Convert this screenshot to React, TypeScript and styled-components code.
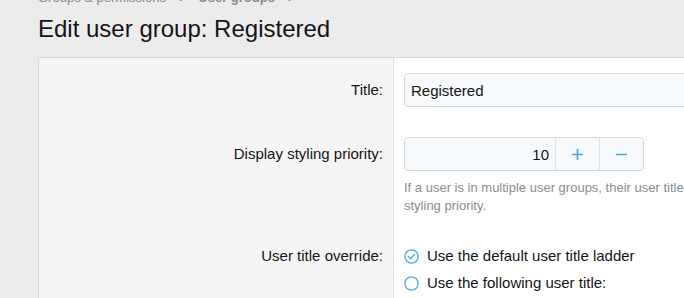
import React, { useState } from 'react'
import styled, { createGlobalStyle } from 'styled-components'

const GlobalStyle = createGlobalStyle`
  html, body {
    margin: 0;
    padding: 0;
    background: #ececec;
    overflow: hidden;
  }
  body {
    font-family: "Liberation Sans", Arial, Helvetica, sans-serif;
    color: #141414;
  }
`

const Page = styled.div`
  padding: 0 0 0 38px;
  width: 1100px;
`

const Crumbs = styled.ul`
  display: flex;
  align-items: center;
  gap: 13px;
  list-style: none;
  margin: -10px 0 0;
  padding: 0;
  font-size: 13px;
  line-height: 16px;
  color: #8a8a8a;
`

const Crumb = styled.li<{ current?: boolean }>`
  font-weight: ${props => (props.current ? 'bold' : 'normal')};
`

const Sep = styled.li`
  font-size: 11px;
`

const Title = styled.h1`
  margin: 8px 0 13px;
  font-size: 24px;
  line-height: 30px;
  font-weight: normal;
  color: #141414;
`

const Block = styled.div`
  border: 1px solid #d8d8d8;
  border-radius: 3px;
  background: #fff;
  overflow: hidden;
`

const Row = styled.dl`
  display: grid;
  grid-template-columns: 355px 1fr;
  margin: 0;
`

const Label = styled.dt<{ lineHeight: number }>`
  background: #f5f5f5;
  border-right: 1px solid #e3e3e3;
  padding: 15px 10px;
  text-align: right;
  font-size: 15px;
  line-height: ${props => props.lineHeight}px;
  color: #141414;
`

const Field = styled.dd`
  margin: 0;
  padding: 15px 10px;
`

const TextInput = styled.input`
  box-sizing: border-box;
  display: block;
  width: 100%;
  height: 34px;
  padding: 0 6px;
  border: 1px solid #d8d8d8;
  border-radius: 4px;
  background: #f7fafd;
  font: inherit;
  font-size: 15px;
  color: #141414;
  outline: none;
`

const NumberBox = styled.div`
  display: flex;
  width: 240px;
  height: 34px;
  box-sizing: border-box;
  border: 1px solid #d8d8d8;
  border-radius: 4px;
  background: #f7fafd;
  overflow: hidden;
`

const NumberInput = styled.input`
  flex: 1;
  min-width: 0;
  border: 0;
  background: transparent;
  text-align: right;
  padding: 0 6px;
  font: inherit;
  font-size: 15px;
  color: #141414;
  outline: none;
`

const StepButton = styled.button`
  width: 44px;
  border: 0;
  border-left: 1px solid #e3e3e3;
  background: transparent;
  color: #47a7eb;
  display: flex;
  align-items: center;
  justify-content: center;
  padding: 0;
  cursor: pointer;
`

const Hint = styled.div`
  margin-top: 8px;
  font-size: 13px;
  line-height: 18px;
  color: #8c8c8c;
  white-space: nowrap;
`

const Choices = styled.ul`
  list-style: none;
  margin: 0;
  padding: 0;
  display: flex;
  flex-direction: column;
  gap: 5px;
`

const Choice = styled.li`
  display: flex;
  align-items: center;
  gap: 8px;
  font-size: 15px;
  line-height: 22px;
  cursor: pointer;
`

const Radio = ({ checked }: { checked: boolean }) => (
  <svg width="15" height="15" viewBox="0 0 15 15">
    <circle cx="7.5" cy="7.5" r="6.6" fill="none" stroke="#47a7eb" strokeWidth="1.3" />
    {checked && (
      <path d="M4.5 7.7l2 2 4-4.2" fill="none" stroke="#47a7eb" strokeWidth="1.3" strokeLinecap="round" strokeLinejoin="round" />
    )}
  </svg>
)

const App = () => {
  const [title, setTitle] = useState('Registered')
  const [priority, setPriority] = useState(10)
  const [override, setOverride] = useState(0)

  return (
    <Page>
      <GlobalStyle />
      <Crumbs>
        <Crumb>Groups &amp; permissions</Crumb>
        <Sep>&gt;</Sep>
        <Crumb current>User groups</Crumb>
        <Sep>&gt;</Sep>
      </Crumbs>
      <Title>Edit user group: Registered</Title>
      <Block>
        <Row>
          <Label lineHeight={34}>Title:</Label>
          <Field>
            <TextInput value={title} onChange={e => setTitle(e.target.value)} />
          </Field>
        </Row>
        <Row>
          <Label lineHeight={34}>Display styling priority:</Label>
          <Field>
            <NumberBox>
              <NumberInput value={priority} onChange={e => setPriority(Number(e.target.value) || 0)} />
              <StepButton onClick={() => setPriority(priority + 1)}>
                <svg width="13" height="13" viewBox="0 0 13 13">
                  <path d="M6.5 1v11M1 6.5h11" stroke="currentColor" strokeWidth="1.7" />
                </svg>
              </StepButton>
              <StepButton onClick={() => setPriority(priority - 1)}>
                <svg width="13" height="13" viewBox="0 0 13 13">
                  <path d="M1 6.5h11" stroke="currentColor" strokeWidth="1.7" />
                </svg>
              </StepButton>
            </NumberBox>
            <Hint>
              If a user is in multiple user groups, their user title and display styling will be taken from the group with the highest display
              <br />
              styling priority.
            </Hint>
          </Field>
        </Row>
        <Row>
          <Label lineHeight={22}>User title override:</Label>
          <Field>
            <Choices>
              <Choice onClick={() => setOverride(0)}>
                <Radio checked={override === 0} />
                Use the default user title ladder
              </Choice>
              <Choice onClick={() => setOverride(1)}>
                <Radio checked={override === 1} />
                Use the following user title:
              </Choice>
            </Choices>
          </Field>
        </Row>
      </Block>
    </Page>
  )
}

export default App
